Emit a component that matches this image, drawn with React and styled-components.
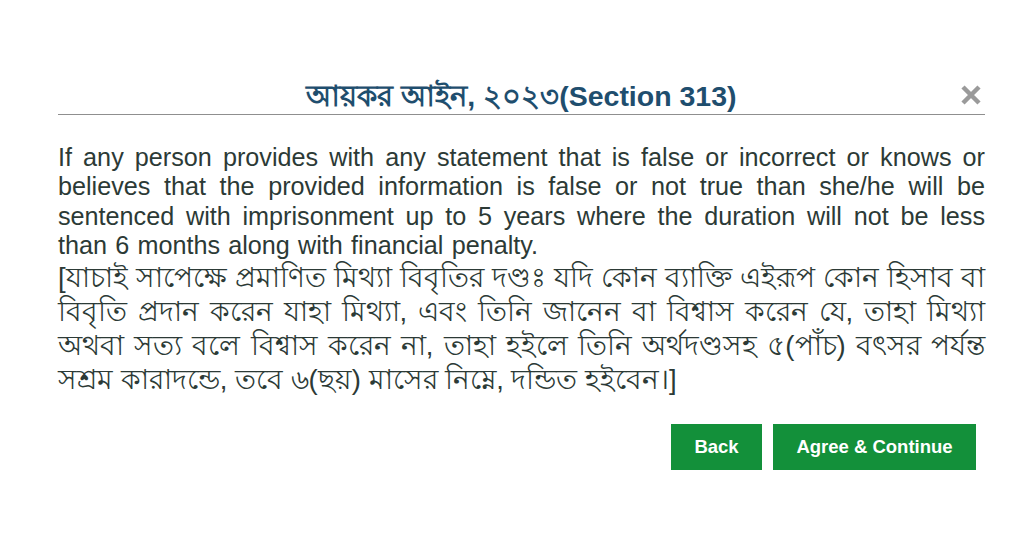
import React from "react";
import styled, { createGlobalStyle } from "styled-components";

const GlobalStyle = createGlobalStyle`
  html, body {
    margin: 0;
    padding: 0;
    background: #fff;
  }
  body {
    font-family: "Liberation Sans", Arial, sans-serif;
  }
`;

const Page = styled.div`
  width: 1024px;
  height: 535px;
  background: #fff;
  box-sizing: border-box;
  padding: 83px 39px 0 58px;
`;

const Modal = styled.div`
  display: flex;
  flex-direction: column;
`;

const Header = styled.div`
  position: relative;
  display: flex;
  justify-content: center;
  align-items: center;
  height: 31px;
  border-bottom: 1px solid #8f8f8f;
`;

const Title = styled.h2`
  margin: 0;
  font-size: 28.5px;
  font-weight: 700;
  color: #1f4e6e;
`;

const CloseButton = styled.button`
  position: absolute;
  right: 1px;
  top: -1px;
  border: 0;
  background: none;
  padding: 0;
  width: 26px;
  height: 26px;
  cursor: pointer;
  display: flex;
  align-items: center;
  justify-content: center;
`;

const Body = styled.div`
  padding-top: 28px;
  color: #2c3a36;
  text-align: justify;
`;

const Paragraph = styled.p`
  margin: 0;
  font-size: ${(p) => (p.$bn ? "27.5px" : "25.2px")};
  line-height: ${(p) => (p.$bn ? "34px" : "29.4px")};
  word-spacing: ${(p) => (p.$bn ? "0" : "1.2px")};
`;

const Actions = styled.div`
  display: flex;
  justify-content: flex-end;
  gap: 11px;
  padding-top: 27px;
  padding-right: 9px;
`;

const ActionButton = styled.button`
  height: 46px;
  padding: 0;
  width: ${(p) => (p.$wide ? "203px" : "91px")};
  border: 0;
  background: #13903a;
  color: #fff;
  font-family: "Liberation Sans", Arial, sans-serif;
  font-size: 18.5px;
  font-weight: 700;
  cursor: pointer;
`;

function CloseIcon() {
  return (
    <svg width="22" height="22" viewBox="0 0 22 22">
      <path
        d="M3 3 L19 19 M19 3 L3 19"
        stroke="#9a9a9a"
        strokeWidth="4.5"
        strokeLinecap="butt"
      />
    </svg>
  );
}

export default function App() {
  return (
    <>
      <GlobalStyle />
      <Page>
        <Modal>
          <Header>
            <Title>আয়কর আইন, ২০২৩(Section 313)</Title>
            <CloseButton aria-label="close">
              <CloseIcon />
            </CloseButton>
          </Header>
          <Body>
            <Paragraph>
              If any person provides with any statement that is false or
              incorrect or knows or believes that the provided information is
              false or not true than she/he will be sentenced with imprisonment
              up to 5 years where the duration will not be less than 6 months
              along with financial penalty.
            </Paragraph>
            <Paragraph $bn>
              [যাচাই সাপেক্ষে প্রমাণিত মিথ্যা বিবৃতির দণ্ডঃ যদি কোন ব্যাক্তি
              এইরূপ কোন হিসাব বা বিবৃতি প্রদান করেন যাহা মিথ্যা, এবং তিনি
              জানেন বা বিশ্বাস করেন যে, তাহা মিথ্যা অথবা সত্য বলে বিশ্বাস
              করেন না, তাহা হইলে তিনি অর্থদণ্ডসহ ৫(পাঁচ) বৎসর পর্যন্ত সশ্রম
              কারাদন্ডে, তবে ৬(ছয়) মাসের নিম্নে, দন্ডিত হইবেন।]
            </Paragraph>
          </Body>
          <Actions>
            <ActionButton>Back</ActionButton>
            <ActionButton $wide>Agree &amp; Continue</ActionButton>
          </Actions>
        </Modal>
      </Page>
    </>
  );
}
